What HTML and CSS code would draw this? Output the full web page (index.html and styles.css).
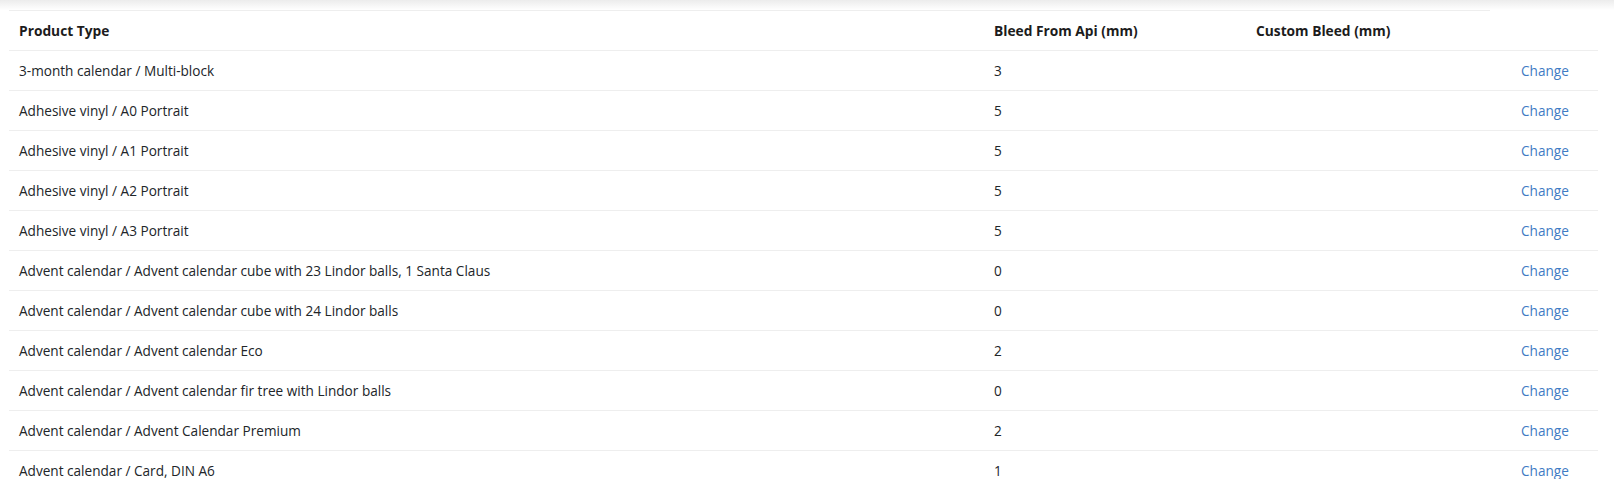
FILE: index.html
```html
<!DOCTYPE html>
<html>
<head>
<meta charset="utf-8">
<link rel="stylesheet" href="styles.css">
</head>
<body>
<div class="topbar"></div>
<div class="page">
  <div class="rule"></div>
  <table class="grid">
    <colgroup>
      <col class="c1"><col class="c2"><col class="c3"><col class="c4">
    </colgroup>
    <thead>
      <tr><th>Product Type</th><th>Bleed From Api (mm)</th><th>Custom Bleed (mm)</th><th></th></tr>
    </thead>
    <tbody>
      <tr><td>3-month calendar / Multi-block</td><td>3</td><td></td><td><a href="#">Change</a></td></tr>
      <tr><td>Adhesive vinyl / A0 Portrait</td><td>5</td><td></td><td><a href="#">Change</a></td></tr>
      <tr><td>Adhesive vinyl / A1 Portrait</td><td>5</td><td></td><td><a href="#">Change</a></td></tr>
      <tr><td>Adhesive vinyl / A2 Portrait</td><td>5</td><td></td><td><a href="#">Change</a></td></tr>
      <tr><td>Adhesive vinyl / A3 Portrait</td><td>5</td><td></td><td><a href="#">Change</a></td></tr>
      <tr><td>Advent calendar / Advent calendar cube with 23 Lindor balls, 1 Santa Claus</td><td>0</td><td></td><td><a href="#">Change</a></td></tr>
      <tr><td>Advent calendar / Advent calendar cube with 24 Lindor balls</td><td>0</td><td></td><td><a href="#">Change</a></td></tr>
      <tr><td>Advent calendar / Advent calendar Eco</td><td>2</td><td></td><td><a href="#">Change</a></td></tr>
      <tr><td>Advent calendar / Advent calendar fir tree with Lindor balls</td><td>0</td><td></td><td><a href="#">Change</a></td></tr>
      <tr><td>Advent calendar / Advent Calendar Premium</td><td>2</td><td></td><td><a href="#">Change</a></td></tr>
      <tr><td>Advent calendar / Card, DIN A6</td><td>1</td><td></td><td><a href="#">Change</a></td></tr>
    </tbody>
  </table>
</div>
</body>
</html>
```
FILE: styles.css
```css
html, body {
  margin: 0;
  padding: 0;
  background: #fff;
  font-family: "Open Sans", "Noto Sans", sans-serif;
  font-size: 13.6px;
  color: #212529;
}
.topbar {
  height: 10px;
  background: linear-gradient(#ececec, #fbfbfb 80%, #fff);
}
.page {
  padding: 0 16px 0 9px;
}
.rule {
  width: 1481px;
  border-top: 1px solid #eeeeee;
}
.grid {
  width: 100%;
  border-collapse: collapse;
  table-layout: fixed;
}
.c1 { width: 975px; }
.c2 { width: 262px; }
.c3 { width: 265px; }
.grid th, .grid td {
  height: 39px;
  padding: 0 10px;
  text-align: left;
  vertical-align: middle;
  border-bottom: 1px solid #eeeeee;
  white-space: nowrap;
}
.grid th {
  font-size: 13.75px;
  font-weight: 700;
  color: #1c1c1c;
}
.grid a {
  color: #3f7bc4;
  text-decoration: none;
}
```
